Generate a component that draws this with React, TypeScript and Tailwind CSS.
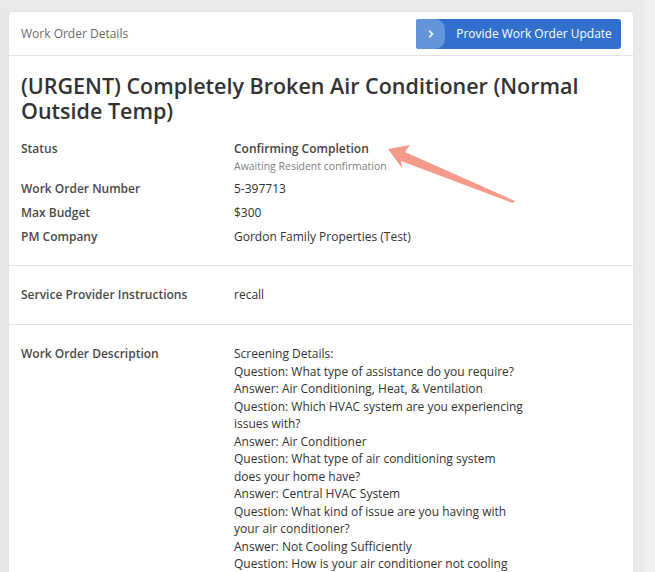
import React from "react";

const desc = [
  "Screening Details:",
  "Question: What type of assistance do you require?",
  "Answer: Air Conditioning, Heat, & Ventilation",
  "Question: Which HVAC system are you experiencing",
  "issues with?",
  "Answer: Air Conditioner",
  "Question: What type of air conditioning system",
  "does your home have?",
  "Answer: Central HVAC System",
  "Question: What kind of issue are you having with",
  "your air conditioner?",
  "Answer: Not Cooling Sufficiently",
  "Question: How is your air conditioner not cooling",
  "sufficiently?",
];

const label = "font-semibold text-[#4a4a4a]";

export default function App() {
  return (
    <div
      className="relative flex h-[572px] w-[655px] overflow-hidden bg-[#e9e9e9] text-[#333]"
      style={{ fontFamily: '"Open Sans", "Noto Sans", sans-serif' }}
    >
      <div className="w-[644px] shrink-0 pt-[12px] pl-[9px]">
        <div className="w-[624px] rounded-[4px] bg-white shadow-[0_0_2px_rgba(0,0,0,0.08)]">
          <div className="flex h-[44px] items-center justify-between border-b border-[#e3e3e3] pl-[12px] pr-[12px]">
            <span className="text-[12px] text-[#6b6b6b]">Work Order Details</span>
            <button className="flex h-[30px] w-[205px] items-stretch overflow-hidden rounded-[3px] bg-[#3170cc] text-white">
              <span className="flex w-[29px] items-center justify-center rounded-r-[10px] bg-[#6494d9]">
                <svg width="8" height="10" viewBox="0 0 8 10" fill="none">
                  <path d="M2.5 2 L5.5 5 L2.5 8" stroke="white" strokeWidth="1.6" strokeLinecap="round" strokeLinejoin="round" />
                </svg>
              </span>
              <span className="flex flex-1 items-center justify-center pl-[2px] text-[12px]">Provide Work Order Update</span>
            </button>
          </div>

          <div className="px-[12px] pt-[17px]">
            <h1 className="w-[580px] text-[21.5px] leading-[25px] font-semibold text-[#333]">
              (URGENT) Completely Broken Air Conditioner (Normal Outside Temp)
            </h1>

            <div className="mt-[17px] grid grid-cols-[213px_1fr] gap-y-[6px] pb-[19px] text-[12px] leading-[18px]">
              <div className={label}>Status</div>
              <div>
                <div className="font-semibold text-[#444]">Confirming Completion</div>
                <div className="text-[10.5px] leading-[16px] text-[#808080]">Awaiting Resident confirmation</div>
              </div>
              <div className={label}>Work Order Number</div>
              <div>5-397713</div>
              <div className={label}>Max Budget</div>
              <div>$300</div>
              <div className={label}>PM Company</div>
              <div>Gordon Family Properties (Test)</div>
            </div>
          </div>

          <div className="border-t border-[#e3e3e3] px-[12px] pt-[20px] pb-[20px]">
            <div className="grid grid-cols-[213px_1fr] text-[12px] leading-[18px]">
              <div className={label}>Service Provider Instructions</div>
              <div>recall</div>
            </div>
          </div>

          <div className="border-t border-[#e3e3e3] px-[12px] pt-[20px] pb-[20px]">
            <div className="grid grid-cols-[213px_1fr] text-[12px] leading-[17.5px]">
              <div className={label}>Work Order Description</div>
              <div className="whitespace-nowrap">
                {desc.map((l, i) => (
                  <div key={i}>{l}</div>
                ))}
              </div>
            </div>
          </div>
        </div>
      </div>
      <div className="w-[11px] shrink-0 bg-[#efefef]" />

      <svg className="absolute left-0 top-0" width="655" height="572" viewBox="0 0 655 572">
        <polygon points="388,149 410,145 405,152 515,201 513,203 401,161 402,168" fill="#f59a88" />
      </svg>
    </div>
  );
}
